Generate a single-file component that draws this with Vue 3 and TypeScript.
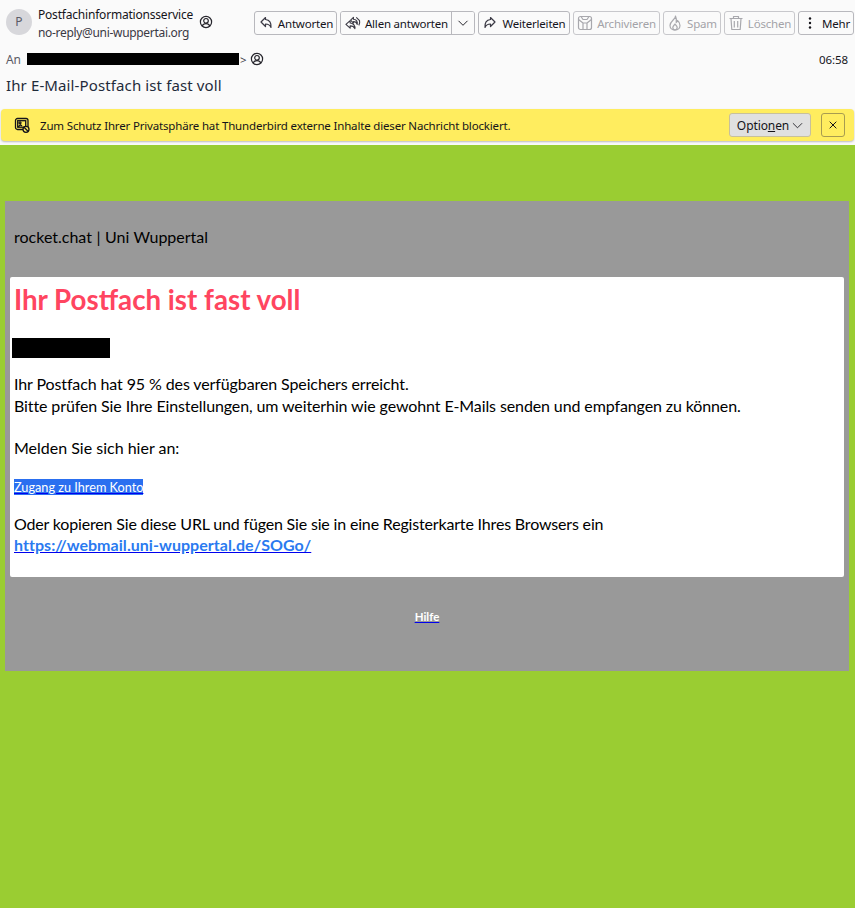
<script setup lang="ts">
interface Action {
  label: string
  icon: string
  width: number
  disabled?: boolean
}

const actions: Action[] = [
  { label: 'Weiterleiten', icon: 'forward', width: 92 },
  { label: 'Archivieren', icon: 'archive', width: 87, disabled: true },
  { label: 'Spam', icon: 'spam', width: 58, disabled: true },
  { label: 'Löschen', icon: 'trash', width: 71, disabled: true },
  { label: 'Mehr', icon: 'more', width: 56 }
]
</script>

<template>
  <div class="page">
    <header class="head">
      <div class="top-row">
        <div class="avatar">P</div>
        <div class="sender">
          <div class="sender-name">Postfachinformationsservice</div>
          <div class="sender-mail">no-reply@uni-wuppertai.org</div>
        </div>
        <svg class="contact" viewBox="0 0 14 14">
          <circle cx="7" cy="7" r="5.6" />
          <circle cx="7" cy="5.8" r="2.3" />
          <path d="M3.2 11C4 9 5.5 8.6 7 8.6s3 .4 3.8 2.4" />
        </svg>
        <div class="actions">
          <button class="btn" style="width: 83px">
            <svg class="ico" viewBox="0 0 16 16">
              <path d="M7.5 2.5 3 7l4.500 4.500V9c3 0 4.500 1 5.500 3.500.4-4.500-1.500-7.500-5.500-8z" />
            </svg>
            Antworten
          </button>
          <div class="split">
            <button class="btn-part main">
              <svg class="ico wide" viewBox="0 0 18 16">
                <path d="M10 1.500 7 4.500l3 3V6c2 0 3.500 1 4 3 .8-3-1-5.500-4-5.500z" />
                <path d="M6.500 5 2 9l4.500 4v-2.500c2.500 0 4 .5 5 3 .5-3-1.500-6-5-6z" />
                <path d="M13 1.500 16.500 5c.6 2.500-.2 4-.8 5" />
              </svg>
              Allen antworten
            </button>
            <button class="btn-part caret">
              <svg viewBox="0 0 12 12"><path d="M1.500 3.800 6 8.300l4.500-4.500" /></svg>
            </button>
          </div>
          <button
            v-for="a in actions"
            :key="a.label"
            class="btn"
            :class="{ off: a.disabled }"
            :style="{ width: a.width + 'px' }"
          >
            <svg v-if="a.icon === 'forward'" class="ico" viewBox="0 0 16 16">
              <path d="M8.500 2.500 13 7l-4.500 4.500V9c-3 0-4.500 1-5.500 3.500-.4-4.500 1.500-7.500 5.500-8z" />
            </svg>
            <svg v-else-if="a.icon === 'archive'" class="ico" viewBox="0 0 16 16">
              <rect x="1.500" y="1.500" width="13" height="13" rx="2" />
              <path d="M1.500 4.500 6 8v6.500M14.500 4.500 10 8v6.500M6 8h4M4 1.500l2 3h4l2-3" />
            </svg>
            <svg v-else-if="a.icon === 'spam'" class="ico" viewBox="0 0 16 16">
              <path d="M8.500 1c.5 3.200-5.500 5-5.500 9.500C3 13.300 5.300 15 8 15s5-1.700 5-4.500c0-2.300-1.200-4-2.500-5-.2 1-.6 1.600-1.300 2 .4-2.300.2-4.600-.7-6.500z" />
              <path d="M8 15c-1.200 0-2.200-1-2.200-2.400 0-1.400 1.300-2.200 2.200-3.600.9 1.400 2.200 2.200 2.200 3.600C10.200 14 9.200 15 8 15z" />
            </svg>
            <svg v-else-if="a.icon === 'trash'" class="ico" viewBox="0 0 16 16">
              <path d="M1.500 3.500h13M5.500 3.500v-2h5v2M3 3.500l.8 11h8.400l.8-11M6.300 6v6.500M9.700 6v6.500" />
            </svg>
            <svg v-else class="ico dots" viewBox="0 0 16 16">
              <circle cx="8" cy="3.500" r="1.200" />
              <circle cx="8" cy="8" r="1.200" />
              <circle cx="8" cy="12.500" r="1.200" />
            </svg>
            {{ a.label }}
          </button>
        </div>
      </div>

      <div class="to-row">
        <span class="to-label">An</span>
        <span class="redact-to"></span>
        <span class="to-gt">&gt;</span>
        <svg class="contact" viewBox="0 0 14 14">
          <circle cx="7" cy="7" r="5.6" />
          <circle cx="7" cy="5.8" r="2.3" />
          <path d="M3.2 11C4 9 5.5 8.6 7 8.6s3 .4 3.8 2.4" />
        </svg>
        <span class="time">06:58</span>
      </div>

      <div class="subject">Ihr E-Mail-Postfach ist fast voll</div>
    </header>

    <div class="notice">
      <svg class="notice-ico" viewBox="0 0 16 16">
        <rect x="1.500" y="1.500" width="12.500" height="11" rx="2" />
        <rect x="3.700" y="3.700" width="8" height="6.500" />
        <circle cx="6" cy="5.800" r="1" />
        <path d="M4 10l2.500-2.200L8 9" />
        <circle cx="12" cy="12.300" r="3" class="fill" />
        <path d="M10 10.300l4 4" />
      </svg>
      <span class="notice-text">Zum Schutz Ihrer Privatsphäre hat Thunderbird externe Inhalte dieser Nachricht blockiert.</span>
      <button class="opt">
        <span>Optio<u>n</u>en</span>
        <svg viewBox="0 0 12 12"><path d="M1 3.500 6 8.500l5-5" /></svg>
      </button>
      <button class="close">
        <svg viewBox="0 0 12 12"><path d="M2 2l8 8M10 2l-8 8" /></svg>
      </button>
    </div>

    <main class="mail">
      <div class="panel">
        <div class="brand">rocket.chat | Uni Wuppertal</div>
        <div class="card">
          <h1>Ihr Postfach ist fast voll</h1>
          <div class="redact-name"></div>
          <p class="first">
            Ihr Postfach hat 95 % des verfügbaren Speichers erreicht.<br />
            Bitte prüfen Sie Ihre Einstellungen, um weiterhin wie gewohnt E-Mails senden und empfangen zu können.
          </p>
          <p class="login">Melden Sie sich hier an:</p>
          <a class="cta" href="#">Zugang zu Ihrem Konto</a>
          <p class="copy">
            Oder kopieren Sie diese URL und fügen Sie sie in eine Registerkarte Ihres Browsers ein<br />
            <a class="url" href="#">https://webmail.uni-wuppertal.de/SOGo/</a>
          </p>
        </div>
        <div class="foot"><a href="#">Hilfe</a></div>
      </div>
    </main>
  </div>
</template>

<style>
html,
body {
  margin: 0;
  height: 100%;
}
#app {
  height: 100%;
}
</style>

<style scoped>
.page {
  display: flex;
  flex-direction: column;
  height: 908px;
  overflow: hidden;
  background: #fafafa;
  font-family: "Noto Sans", "Open Sans", sans-serif;
  color: #15141a;
}

.head {
  height: 109px;
  box-sizing: border-box;
  padding: 6px 1px 0 6px;
  flex: none;
}

.top-row {
  display: flex;
  align-items: flex-start;
  height: 34px;
}

.avatar {
  flex: none;
  width: 26px;
  height: 26px;
  margin-top: 3px;
  border-radius: 50%;
  background: #d7d7db;
  color: #5b5b66;
  font-size: 12px;
  line-height: 26px;
  text-align: center;
}

.sender {
  margin-left: 6px;
  font-size: 12px;
  letter-spacing: -0.2px;
  white-space: nowrap;
  width: 156px;
}

.sender-name {
  line-height: 18px;
}

.sender-mail {
  line-height: 18px;
  letter-spacing: -0.32px;
  color: #3a3944;
}

.contact {
  flex: none;
  width: 14px;
  height: 14px;
  fill: none;
  stroke: #26252c;
  stroke-width: 1.2;
}

.top-row .contact {
  margin: 9px 0 0 5px;
}

.actions {
  display: flex;
  gap: 3px;
  margin: 5px 0 0 auto;
}

.btn,
.btn-part {
  display: flex;
  align-items: center;
  justify-content: center;
  gap: 4px;
  height: 24px;
  padding: 0;
  font: inherit;
  font-size: 11.5px;
  letter-spacing: -0.2px;
  color: #15141a;
  background: #fafafa;
  white-space: nowrap;
}

.btn {
  box-sizing: border-box;
  border: 1px solid #b8b8bd;
  border-radius: 3px;
}

.btn.off {
  color: #a3a3a8;
  border-color: #c8c8cc;
}

.ico {
  flex: none;
  width: 16px;
  height: 16px;
  fill: none;
  stroke: #3a3944;
  stroke-width: 1.2;
  stroke-linejoin: round;
}

.ico.wide {
  width: 17px;
  height: 15px;
}

.off .ico {
  stroke: #a8a8ad;
}

.ico.dots {
  fill: #15141a;
  stroke: none;
}

.split {
  display: flex;
  box-sizing: border-box;
  width: 135px;
  height: 24px;
  border: 1px solid #b8b8bd;
  border-radius: 3px;
  overflow: hidden;
}

.btn-part {
  border: 0;
  height: 22px;
}

.btn-part.main {
  width: 111px;
  border-right: 1px solid #b8b8bd;
}

.btn-part.caret {
  flex: 1;
}

.btn-part.caret svg {
  width: 12px;
  height: 12px;
  fill: none;
  stroke: #26252c;
  stroke-width: 1;
}

.to-row {
  display: flex;
  align-items: center;
  height: 18px;
  margin-top: 10px;
  font-size: 11.5px;
  letter-spacing: -0.1px;
  padding-right: 6px;
}

.to-label {
  color: #5b5b66;
  font-size: 12px;
  width: 21px;
}

.redact-to {
  width: 212px;
  height: 12px;
  background: #000;
}

.to-gt {
  margin: 0 0 0 1px;
  color: #3a3944;
}

.to-row .contact {
  margin-left: 4px;
}

.time {
  margin-left: auto;
}

.subject {
  margin-top: 6px;
  font-size: 15px;
  line-height: 22px;
  color: #1f2b3a;
  letter-spacing: 0.12px;
}

.notice {
  flex: none;
  display: flex;
  align-items: center;
  box-sizing: border-box;
  height: 32px;
  margin: 0 1px;
  padding: 0 9px 0 13px;
  background: #ffed5f;
  border-radius: 4px;
  box-shadow: 0 1px 2px rgba(0, 0, 0, 0.25);
}

.notice-ico {
  flex: none;
  width: 16px;
  height: 16px;
  fill: none;
  stroke: #15141a;
  stroke-width: 1.3;
}

.notice-ico .fill {
  fill: #ffed5f;
}

.notice-text {
  margin-left: 10px;
  font-size: 11.5px;
  letter-spacing: -0.17px;
  white-space: nowrap;
}

.opt {
  margin-left: auto;
  box-sizing: border-box;
  display: flex;
  align-items: center;
  justify-content: center;
  gap: 3px;
  width: 82px;
  height: 24px;
  padding: 0;
  border: 1px solid #c8c09a;
  border-radius: 3px;
  background: #e0e0e0;
  font: inherit;
  font-size: 12px;
  letter-spacing: -0.1px;
  color: #15141a;
}

.opt svg {
  width: 11px;
  height: 11px;
  fill: none;
  stroke: #26252c;
  stroke-width: 1;
}

.close {
  box-sizing: border-box;
  display: flex;
  align-items: center;
  justify-content: center;
  width: 24px;
  height: 24px;
  margin-left: 10px;
  padding: 0;
  border: 1px solid #a89c50;
  border-radius: 3px;
  background: transparent;
}

.close svg {
  width: 10px;
  height: 10px;
  fill: none;
  stroke: #15141a;
  stroke-width: 1.2;
}

.mail {
  flex: 1;
  margin-top: 4px;
  padding: 56px 6px 0 5px;
  background: #9acd32;
  font-family: Lato, "Open Sans", sans-serif;
  color: #000;
}

.panel {
  background: #999;
  padding: 0 5px;
}

.brand {
  height: 76px;
  box-sizing: border-box;
  padding: 26px 0 0 4px;
  font-size: 16px;
  line-height: 20px;
  word-spacing: 0.4px;
}

.card {
  height: 300px;
  box-sizing: border-box;
  padding: 7px 4px 0;
  background: #fff;
  border-radius: 2px;
}

h1 {
  margin: 0;
  font-size: 27.7px;
  line-height: 32px;
  font-weight: 700;
  color: #ff4560;
}

.redact-name {
  width: 98px;
  height: 20px;
  margin: 22px 0 0 -2px;
  background: #000;
}

p {
  margin: 0;
  font-size: 16px;
  letter-spacing: -0.11px;
  line-height: 21.5px;
}

.first {
  margin-top: 15px;
}

.login {
  margin-top: 21px;
  letter-spacing: 0;
}

.cta {
  display: inline-block;
  margin-top: 20px;
  background: #2a6ff0;
  color: #fff;
  font-size: 12.7px;
  line-height: 16px;
  text-decoration-color: #0000ee;
}

.copy {
  margin-top: 18px;
  letter-spacing: -0.17px;
}

.url {
  color: #2a7af0;
  font-weight: 700;
  letter-spacing: 0.05px;
  text-decoration-color: #0000ee;
}

.foot {
  height: 94px;
  box-sizing: border-box;
  padding-top: 32px;
  text-align: center;
  font-size: 11.5px;
  line-height: 16px;
}

.foot a {
  color: #fff;
  font-weight: 700;
  text-decoration-color: #0000ee;
}
</style>
